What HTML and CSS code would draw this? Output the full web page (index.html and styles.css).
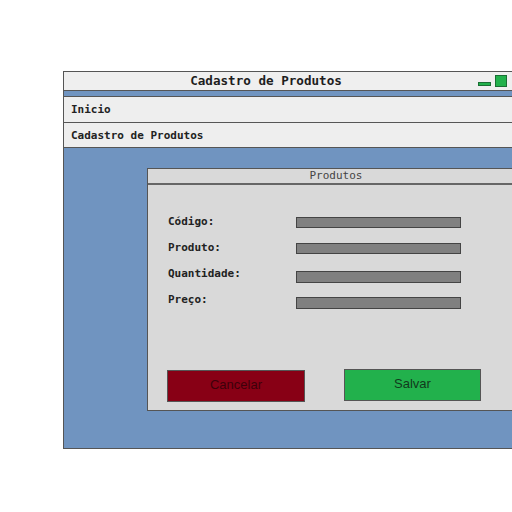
FILE: index.html
```html
<!DOCTYPE html>
<html lang="pt">
<head>
<meta charset="utf-8">
<title>Cadastro de Produtos</title>
<link rel="stylesheet" href="styles.css">
</head>
<body>
<div class="window">
  <div class="titlebar">
    <div class="title">Cadastro de Produtos</div>
    <div class="controls">
      <span class="ctl-min"></span>
      <span class="ctl-max"></span>
    </div>
  </div>
  <div class="strip"></div>
  <div class="menu-row">Inicio</div>
  <div class="menu-row second">Cadastro de Produtos</div>
  <div class="desk">
    <div class="panel">
      <div class="panel-head">Produtos</div>
      <div class="panel-body">
        <div class="form">
          <div class="field"><span class="label">Código:</span><span class="input"></span></div>
          <div class="field"><span class="label">Produto:</span><span class="input"></span></div>
          <div class="field low"><span class="label">Quantidade:</span><span class="input"></span></div>
          <div class="field low"><span class="label">Preço:</span><span class="input"></span></div>
        </div>
        <div class="actions">
          <button class="btn cancel">Cancelar</button>
          <button class="btn save">Salvar</button>
        </div>
      </div>
    </div>
  </div>
</div>
</body>
</html>
```
FILE: styles.css
```css
html, body {
  margin: 0;
  padding: 0;
  background: #ffffff;
  overflow: hidden;
  width: 512px;
  height: 512px;
}
body {
  padding-top: 71px;
  padding-left: 63px;
  box-sizing: border-box;
  font-family: "DejaVu Sans Mono", "Liberation Mono", monospace;
  color: #222;
}
.window {
  width: 460px;
  height: 378px;
  border: 1px solid #555;
  box-sizing: border-box;
  display: flex;
  flex-direction: column;
  background: #7094c0;
}
.titlebar {
  height: 18px;
  display: flex;
  align-items: center;
  background: #efefef;
  border-bottom: 1px solid #555;
  flex: none;
}
.title {
  flex: 1;
  text-align: center;
  font-weight: bold;
  font-size: 12.6px;
  line-height: 14px;
  padding-bottom: 1px;
  color: #1e1e1e;
}
.controls {
  width: 54px;
  display: flex;
  align-items: center;
  padding-left: 10px;
  box-sizing: border-box;
  gap: 4px;
}
.ctl-min {
  width: 13px;
  height: 4px;
  background: #22b14c;
  border: 1px solid #1a6e34;
  box-sizing: border-box;
  margin-top: 6px;
}
.ctl-max {
  width: 12px;
  height: 12px;
  background: #22b14c;
  border: 1px solid #1a6e34;
  box-sizing: border-box;
}
.strip {
  height: 5px;
  flex: none;
  background: #7094c0;
  border-bottom: 1px solid #555;
}
.menu-row {
  flex: none;
  height: 26px;
  box-sizing: border-box;
  background: #eeeeee;
  border-bottom: 1px solid #555;
  padding-left: 7px;
  display: flex;
  align-items: center;
  font-size: 11px;
  font-weight: bold;
  color: #222;
}
.menu-row.second {
  height: 25px;
}
.desk {
  flex: 1;
  padding-top: 20px;
  padding-left: 83px;
}
.panel {
  width: 378px;
  height: 243px;
  border: 1px solid #555;
  box-sizing: border-box;
  background: #d9d9d9;
  display: flex;
  flex-direction: column;
}
.panel-head {
  height: 16px;
  flex: none;
  box-sizing: border-box;
  border-bottom: 2px solid #666;
  text-align: center;
  font-size: 11px;
  line-height: 14px;
  color: #444;
}
.panel-body {
  flex: 1;
  display: flex;
  flex-direction: column;
  justify-content: space-between;
  padding: 23px 0 8px 19px;
}
.form {
  display: flex;
  flex-direction: column;
}
.field {
  height: 26px;
  display: flex;
  align-items: center;
}
.label {
  width: 129px;
  padding-left: 1px;
  box-sizing: border-box;
  font-size: 11px;
  font-weight: bold;
  color: #222;
}
.input {
  width: 165px;
  height: 11px;
  background: #808080;
  border: 1px solid #444;
  box-sizing: border-box;
  margin-top: 2px;
}
.field.low .input {
  margin-top: 8px;
  height: 12px;
}
.actions {
  display: flex;
  gap: 39px;
  align-items: flex-start;
}
.btn {
  height: 32px;
  box-sizing: border-box;
  border: 1px solid #555;
  font-family: "Liberation Sans", Arial, sans-serif;
  font-size: 13px;
  padding: 0 0 4px 0;
}
.cancel {
  width: 138px;
  background: #880015;
  color: #3d000a;
  margin-top: 1px;
}
.save {
  width: 137px;
  background: #22b14c;
  color: #113a1c;
}
```
